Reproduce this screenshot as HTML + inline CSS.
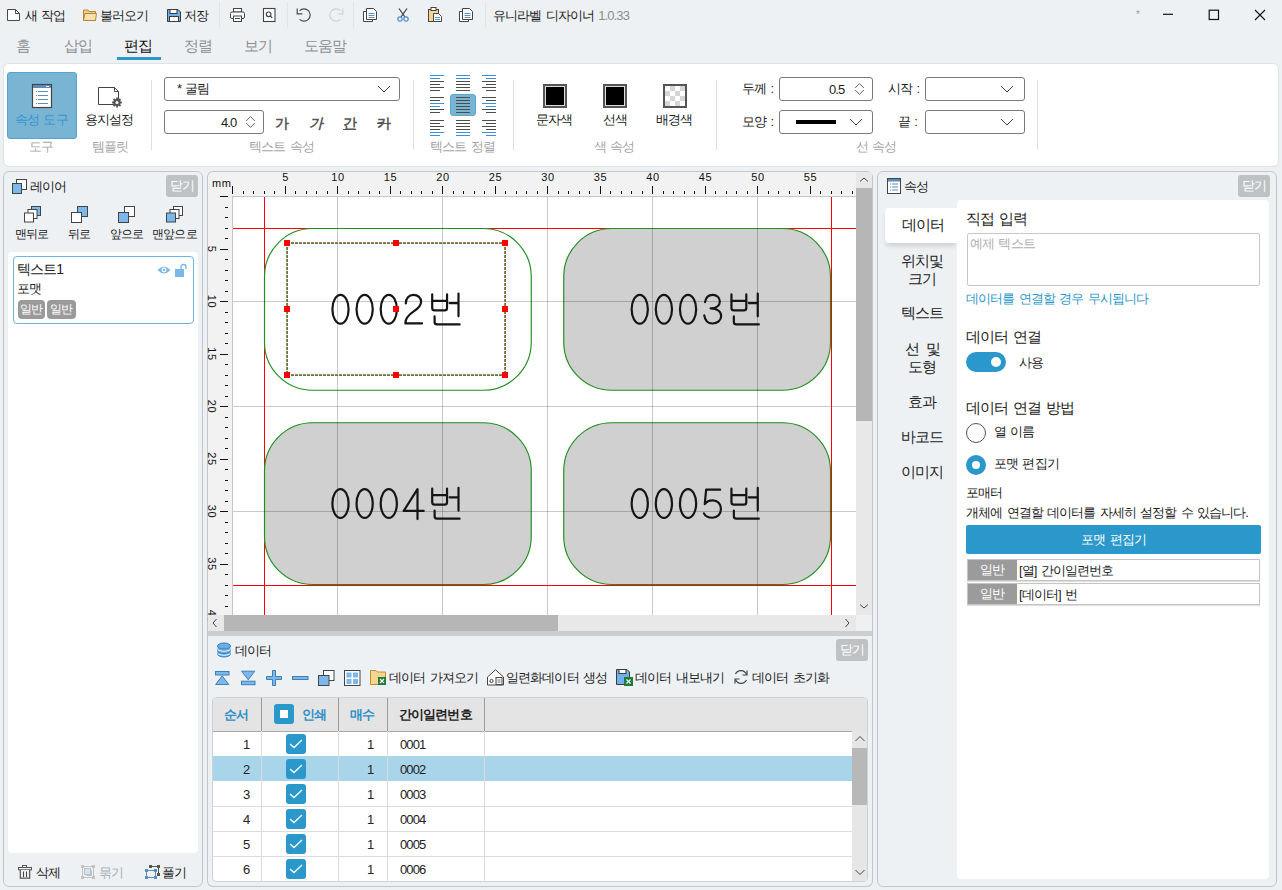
<!DOCTYPE html>
<html><head><meta charset="utf-8">
<style>
*{box-sizing:border-box;margin:0;padding:0}
html,body{width:1282px;height:890px;overflow:hidden;background:#eef1f4;font-family:"Liberation Sans",sans-serif;font-size:13px;letter-spacing:-0.9px;word-spacing:1.5px;color:#222}
.a{position:absolute}
.t{position:absolute;white-space:nowrap;line-height:1;margin-left:-1px}
svg{position:absolute;overflow:visible}
.sep{position:absolute;width:1px;background:#dcdfe2}
.gl{position:absolute;white-space:nowrap;line-height:1;color:#a2a5a8;font-size:13px;margin-left:-1px}
.combo{position:absolute;border:1px solid #7a7a7a;border-radius:3px;background:#fff}
.panel{position:absolute;border:1px solid #c3c7cb;border-radius:6px;background:#eef1f4}
.close{position:absolute;background:#bec2c5;color:#fff;border-radius:3px;font-size:13px;line-height:22px;text-align:center}
</style></head><body>

<!-- ===== TITLE BAR ===== -->
<div id="titlebar">
<svg style="left:7px;top:9px" width="14" height="12" viewBox="0 0 14 12"><path d="M0.5 0.5H8.5L12.5 4.5V11.5H0.5Z M8.5 0.5V4.5H12.5" fill="#fff" stroke="#4a4a4a" stroke-width="1"/></svg>
<div class="t" style="left:26px;top:9px">새 작업</div>
<svg style="left:83px;top:9px" width="14" height="12" viewBox="0 0 14 12"><path d="M0.5 1H5L6.2 2.5H12.5V11.5H0.5Z" fill="#f3cf85" stroke="#b8863a"/><path d="M0.5 11.5L2 4.5H13.5L12.5 11.5Z" fill="#fde2a8" stroke="#b8863a"/></svg>
<div class="t" style="left:101px;top:9px">불러오기</div>
<svg style="left:167px;top:9px" width="14" height="13" viewBox="0 0 14 13"><path d="M0.5 0.5H11L13.5 3V12.5H0.5Z" fill="#6fb1e8" stroke="#3b3b3b"/><rect x="3" y="0.5" width="7" height="4" fill="#fff" stroke="#3b3b3b"/><rect x="2.5" y="7.5" width="9" height="5" fill="#fff" stroke="#3b3b3b"/></svg>
<div class="t" style="left:185px;top:9px">저장</div>
<div class="sep" style="left:219px;top:2px;height:26px;background:#e1e4e7"></div>
<!-- print -->
<svg style="left:230px;top:8px" width="15" height="14" viewBox="0 0 15 14"><rect x="3.5" y="0.5" width="8" height="3.5" fill="#fff" stroke="#444"/><rect x="0.5" y="4" width="14" height="6.5" rx="1.5" fill="#fff" stroke="#444"/><rect x="3.5" y="8" width="8" height="5.5" fill="#fff" stroke="#444"/><line x1="5" y1="10.5" x2="10" y2="10.5" stroke="#444"/></svg>
<!-- preview -->
<svg style="left:263px;top:8px" width="13" height="14" viewBox="0 0 13 14"><rect x="0.5" y="0.5" width="11.5" height="13" fill="#fff" stroke="#444" stroke-width="1.1"/><circle cx="5.6" cy="6.3" r="2.3" fill="none" stroke="#444" stroke-width="1.2"/><line x1="7.3" y1="8" x2="9.2" y2="9.9" stroke="#444" stroke-width="1.3"/></svg>
<div class="sep" style="left:287px;top:2px;height:26px;background:#e1e4e7"></div>
<!-- undo/redo -->
<svg style="left:296px;top:7px" width="16" height="16" viewBox="0 0 16 16"><path d="M3.6 3.6A6.2 6.2 0 1 1 3.6 12.4" fill="none" stroke="#4a4a4a" stroke-width="1.2"/><path d="M1.2 1.6V6.9H6.4" fill="none" stroke="#4a4a4a" stroke-width="1.2"/></svg>
<svg style="left:328px;top:7px" width="16" height="16" viewBox="0 0 16 16"><path d="M12.4 3.6A6.2 6.2 0 1 0 12.4 12.4" fill="none" stroke="#cdd0d3" stroke-width="1.2"/><path d="M14.8 1.6V6.9H9.6" fill="none" stroke="#cdd0d3" stroke-width="1.2"/></svg>
<div class="sep" style="left:353px;top:2px;height:26px;background:#e1e4e7"></div>
<!-- copy -->
<svg style="left:363px;top:8px" width="15" height="14" viewBox="0 0 15 14"><path d="M3.5 3.5H0.5V13.5H9.5V11" fill="#fff" stroke="#444"/><path d="M3.5 0.5H10.5L13.5 3.5V11.5H3.5Z" fill="#fff" stroke="#444"/><path d="M5.5 5.5H11.5M5.5 7.5H11.5M5.5 9.5H11.5" stroke="#5b93c8"/></svg>
<!-- cut -->
<svg style="left:397px;top:8px" width="12" height="14" viewBox="0 0 12 14"><path d="M2 0.5L8 9M10 0.5L4 9" stroke="#444" stroke-width="1.3"/><circle cx="3" cy="11" r="2.2" fill="none" stroke="#4f8fd0" stroke-width="1.2"/><circle cx="9" cy="11" r="2.2" fill="none" stroke="#4f8fd0" stroke-width="1.2"/></svg>
<!-- paste -->
<svg style="left:428px;top:7px" width="14" height="15" viewBox="0 0 14 15"><rect x="0.5" y="2.5" width="10" height="12" fill="#f3d59b" stroke="#444"/><rect x="3" y="0.5" width="5" height="3" fill="#fff" stroke="#444"/><path d="M5.5 6.5H10.5L13.5 9.5V14.5H5.5Z" fill="#fff" stroke="#444"/><path d="M7 10.5H12M7 12.5H12" stroke="#5b93c8"/></svg>
<svg style="left:459px;top:8px" width="15" height="14" viewBox="0 0 15 14"><path d="M3.5 3.5H0.5V13.5H9.5V11" fill="#fff" stroke="#444"/><path d="M3.5 0.5H10.5L13.5 3.5V11.5H3.5Z" fill="#fff" stroke="#444"/><path d="M5.5 5.5H11.5M5.5 7.5H11.5M5.5 9.5H11.5" stroke="#5b93c8"/></svg>
<div class="sep" style="left:485px;top:2px;height:26px;background:#e1e4e7"></div>
<div class="t" style="left:494px;top:9px">유니라벨 디자이너 <span style="color:#8a8d90">1.0.33</span></div>
<div class="t" style="left:1137px;top:10px;color:#999;font-size:10px">*</div>
<svg style="left:1163px;top:8px" width="12" height="12" viewBox="0 0 12 12"><line x1="0" y1="6.3" x2="10" y2="6.3" stroke="#111" stroke-width="1.2"/></svg>
<svg style="left:1208px;top:9px" width="12" height="12" viewBox="0 0 12 12"><rect x="1.2" y="1.2" width="9.3" height="9.3" fill="none" stroke="#111" stroke-width="1.2"/></svg>
<svg style="left:1254px;top:9px" width="12" height="12" viewBox="0 0 12 12"><path d="M1 1L11 11M11 1L1 11" stroke="#111" stroke-width="1.1"/></svg>
</div>

<!-- ===== TABS ===== -->
<div class="t" style="left:17px;top:38px;font-size:15px;color:#8c9094">홈</div>
<div class="t" style="left:65px;top:38px;font-size:15px;color:#8c9094">삽입</div>
<div class="t" style="left:125px;top:38px;font-size:15px;color:#111">편집</div>
<div class="a" style="left:117px;top:57px;width:44px;height:3px;background:#2b98cc"></div>
<div class="t" style="left:185px;top:38px;font-size:15px;color:#8c9094">정렬</div>
<div class="t" style="left:245px;top:38px;font-size:15px;color:#8c9094">보기</div>
<div class="t" style="left:305px;top:38px;font-size:15px;color:#8c9094">도움말</div>

<!-- ===== RIBBON ===== -->
<div class="a" style="left:4px;top:64px;width:1274px;height:102px;background:#fff;border-radius:5px;box-shadow:0 0 0 1px #e0e3e6,0 1px 0 0 #c9ccd0"></div>
<!-- active button -->
<div class="a" style="left:7px;top:72px;width:70px;height:67px;background:#7ab4d3;border:1px solid #52a6d6;border-radius:3px"></div>
<svg style="left:32px;top:84px" width="21" height="25" viewBox="0 0 21 25"><rect x="0.5" y="0.5" width="19" height="23" fill="#fff" stroke="#444" stroke-width="1.2"/><rect x="1" y="1" width="18" height="3" fill="#5b8db8"/><rect x="14" y="2" width="3" height="1" fill="#fff"/><g fill="#5b8db8"><rect x="4" y="7" width="1" height="1"/><rect x="6" y="7" width="10" height="1"/><rect x="4" y="11" width="1" height="1"/><rect x="6" y="11" width="10" height="1"/><rect x="4" y="15" width="1" height="1"/><rect x="6" y="15" width="10" height="1"/><rect x="4" y="19" width="1" height="1"/><rect x="6" y="19" width="10" height="1"/></g></svg>
<div class="t" style="left:16px;top:113px;color:#2e93d2">속성 도구</div>
<svg style="left:98px;top:87px" width="27" height="22" viewBox="0 0 27 22"><path d="M0.5 0.5H16.5L20.5 4.5V17.5H0.5Z M16.5 0.5V4.5H20.5" fill="#fff" stroke="#444"/><g transform="translate(19 15.5)"><circle r="3.6" fill="#555"/><g stroke="#555" stroke-width="1.8"><line x1="0" y1="-5" x2="0" y2="5"/><line x1="-5" y1="0" x2="5" y2="0"/><line x1="-3.5" y1="-3.5" x2="3.5" y2="3.5"/><line x1="-3.5" y1="3.5" x2="3.5" y2="-3.5"/></g><circle r="1.5" fill="#fff"/></g></svg>
<div class="t" style="left:86px;top:113px">용지설정</div>
<div class="gl" style="left:30px;top:140px">도구</div>
<div class="gl" style="left:93px;top:140px">템플릿</div>
<div class="sep" style="left:151px;top:80px;height:70px"></div>
<!-- font combo -->
<div class="combo" style="left:164px;top:77px;width:236px;height:24px"></div>
<div class="t" style="left:178px;top:82px">* 굴림</div>
<svg style="left:377px;top:85px" width="14" height="8" viewBox="0 0 14 8"><path d="M1 1L7 7L13 1" fill="none" stroke="#444"/></svg>
<div class="combo" style="left:164px;top:110px;width:100px;height:24px"></div>
<div class="t" style="left:222px;top:116px">4.0</div>
<svg style="left:245px;top:115px" width="11" height="14" viewBox="0 0 11 14"><path d="M1.2 6L5.5 1.6L9.8 6M1.2 8L5.5 12.4L9.8 8" fill="none" stroke="#666" stroke-width="1"/></svg>
<div class="t" style="left:276px;top:116px;font-size:14px;font-weight:bold;color:#555">가</div>
<div class="t" style="left:310px;top:116px;font-size:14px;font-weight:bold;font-style:italic;color:#555">가</div>
<div class="t" style="left:344px;top:116px;font-size:14px;font-weight:bold;color:#555;text-decoration:underline">간</div>
<div class="t" style="left:378px;top:116px;font-size:14px;font-weight:bold;color:#555;text-decoration:line-through">카</div>
<div class="gl" style="left:250px;top:140px">텍스트 속성</div>
<div class="sep" style="left:413px;top:80px;height:70px"></div>
<!-- align grid -->
<div class="a" style="left:450px;top:94px;width:26px;height:22px;background:#7ab4d3;border:1px solid #59a7d3;border-radius:3px"></div>
<svg style="left:0;top:0" width="520" height="140" viewBox="0 0 520 140"><rect x="430" y="75" width="14" height="1" fill="#3b8fdc"/><rect x="430" y="78" width="10" height="1" fill="#3b8fdc"/><rect x="430" y="81" width="14" height="1" fill="#4d4d4d"/><rect x="430" y="84" width="10" height="1" fill="#4d4d4d"/><rect x="430" y="87" width="14" height="1" fill="#4d4d4d"/><rect x="430" y="90" width="10" height="1" fill="#4d4d4d"/><rect x="456" y="75" width="14" height="1" fill="#3b8fdc"/><rect x="456" y="78" width="14" height="1" fill="#3b8fdc"/><rect x="456" y="81" width="14" height="1" fill="#4d4d4d"/><rect x="456" y="84" width="14" height="1" fill="#4d4d4d"/><rect x="456" y="87" width="14" height="1" fill="#4d4d4d"/><rect x="456" y="90" width="14" height="1" fill="#4d4d4d"/><rect x="482" y="75" width="14" height="1" fill="#3b8fdc"/><rect x="486" y="78" width="10" height="1" fill="#3b8fdc"/><rect x="482" y="81" width="14" height="1" fill="#4d4d4d"/><rect x="486" y="84" width="10" height="1" fill="#4d4d4d"/><rect x="482" y="87" width="14" height="1" fill="#4d4d4d"/><rect x="486" y="90" width="10" height="1" fill="#4d4d4d"/><rect x="430" y="97" width="14" height="1" fill="#4d4d4d"/><rect x="430" y="100" width="10" height="1" fill="#4d4d4d"/><rect x="430" y="103" width="14" height="1" fill="#3b8fdc"/><rect x="430" y="106" width="10" height="1" fill="#3b8fdc"/><rect x="430" y="109" width="14" height="1" fill="#4d4d4d"/><rect x="430" y="112" width="10" height="1" fill="#4d4d4d"/><rect x="456" y="97" width="14" height="1" fill="#4d4d4d"/><rect x="456" y="100" width="14" height="1" fill="#4d4d4d"/><rect x="456" y="103" width="14" height="1" fill="#4d4d4d"/><rect x="456" y="106" width="14" height="1" fill="#4d4d4d"/><rect x="456" y="109" width="14" height="1" fill="#4d4d4d"/><rect x="456" y="112" width="14" height="1" fill="#4d4d4d"/><rect x="482" y="97" width="14" height="1" fill="#4d4d4d"/><rect x="486" y="100" width="10" height="1" fill="#4d4d4d"/><rect x="482" y="103" width="14" height="1" fill="#3b8fdc"/><rect x="486" y="106" width="10" height="1" fill="#3b8fdc"/><rect x="482" y="109" width="14" height="1" fill="#4d4d4d"/><rect x="486" y="112" width="10" height="1" fill="#4d4d4d"/><rect x="430" y="120" width="14" height="1" fill="#4d4d4d"/><rect x="430" y="123" width="10" height="1" fill="#4d4d4d"/><rect x="430" y="126" width="14" height="1" fill="#4d4d4d"/><rect x="430" y="129" width="10" height="1" fill="#4d4d4d"/><rect x="430" y="132" width="14" height="1" fill="#3b8fdc"/><rect x="430" y="135" width="10" height="1" fill="#3b8fdc"/><rect x="456" y="120" width="14" height="1" fill="#4d4d4d"/><rect x="456" y="123" width="14" height="1" fill="#4d4d4d"/><rect x="456" y="126" width="14" height="1" fill="#4d4d4d"/><rect x="456" y="129" width="14" height="1" fill="#4d4d4d"/><rect x="456" y="132" width="14" height="1" fill="#3b8fdc"/><rect x="456" y="135" width="14" height="1" fill="#3b8fdc"/><rect x="482" y="120" width="14" height="1" fill="#4d4d4d"/><rect x="486" y="123" width="10" height="1" fill="#4d4d4d"/><rect x="482" y="126" width="14" height="1" fill="#4d4d4d"/><rect x="486" y="129" width="10" height="1" fill="#4d4d4d"/><rect x="482" y="132" width="14" height="1" fill="#3b8fdc"/><rect x="486" y="135" width="10" height="1" fill="#3b8fdc"/></svg>
<div class="gl" style="left:431px;top:140px">텍스트 정렬</div>
<div class="sep" style="left:513px;top:80px;height:70px"></div>
<!-- colors -->
<div class="a" style="left:543px;top:84px;width:24px;height:24px;background:#000;border:2px solid #555;box-shadow:inset 0 0 0 1px #ddd"></div>
<div class="t" style="left:537px;top:113px">문자색</div>
<div class="a" style="left:603px;top:84px;width:24px;height:24px;background:#000;border:2px solid #555;box-shadow:inset 0 0 0 1px #ddd"></div>
<div class="t" style="left:604px;top:113px">선색</div>
<div class="a" style="left:663px;top:84px;width:24px;height:24px;border:2px solid #555;background-color:#fff;background-image:linear-gradient(45deg,#d6d6d6 25%,transparent 25%,transparent 75%,#d6d6d6 75%),linear-gradient(45deg,#d6d6d6 25%,transparent 25%,transparent 75%,#d6d6d6 75%);background-size:10px 10px;background-position:0 0,5px 5px"></div>
<div class="t" style="left:657px;top:113px">배경색</div>
<div class="gl" style="left:595px;top:140px">색 속성</div>
<div class="sep" style="left:716px;top:80px;height:70px"></div>
<!-- line props -->
<div class="t" style="left:743px;top:82px">두께 :</div>
<div class="combo" style="left:779px;top:77px;width:94px;height:24px"></div>
<div class="t" style="left:830px;top:83px">0.5</div>
<svg style="left:854px;top:82px" width="11" height="14" viewBox="0 0 11 14"><path d="M1.2 6L5.5 1.6L9.8 6M1.2 8L5.5 12.4L9.8 8" fill="none" stroke="#666" stroke-width="1"/></svg>
<div class="t" style="left:743px;top:115px">모양 :</div>
<div class="combo" style="left:779px;top:110px;width:94px;height:24px"></div>
<div class="a" style="left:796px;top:120px;width:40px;height:4px;background:#000"></div>
<svg style="left:849px;top:118px" width="14" height="8" viewBox="0 0 14 8"><path d="M1 1L7 7L13 1" fill="none" stroke="#444"/></svg>
<div class="gl" style="left:857px;top:140px">선 속성</div>
<div class="t" style="left:889px;top:82px">시작 :</div>
<div class="combo" style="left:925px;top:77px;width:100px;height:24px"></div>
<svg style="left:1000px;top:85px" width="14" height="8" viewBox="0 0 14 8"><path d="M1 1L7 7L13 1" fill="none" stroke="#444"/></svg>
<div class="t" style="left:899px;top:115px">끝 :</div>
<div class="combo" style="left:925px;top:110px;width:100px;height:24px"></div>
<svg style="left:1000px;top:118px" width="14" height="8" viewBox="0 0 14 8"><path d="M1 1L7 7L13 1" fill="none" stroke="#444"/></svg>
<div class="sep" style="left:1037px;top:80px;height:70px"></div>

<!-- ===== LEFT PANEL ===== -->
<div class="panel" style="left:3px;top:171px;width:200px;height:716px"></div>
<svg style="left:12px;top:179px" width="15" height="15" viewBox="0 0 15 15"><rect x="4.5" y="0.5" width="10" height="10" fill="#fff" stroke="#444"/><rect x="0.5" y="4.5" width="9" height="10" fill="#7cb8ea" stroke="#444"/></svg>
<div class="t" style="left:31px;top:180px">레이어</div>
<div class="close" style="left:166px;top:175px;width:32px;height:22px">닫기</div>
<!-- order buttons -->
<svg style="left:24px;top:206px" width="17" height="17" viewBox="0 0 17 17"><rect x="7.5" y="0.5" width="9" height="9" fill="#7cb8ea" stroke="#444"/><rect x="4" y="3.5" width="9" height="9" fill="#fff" stroke="#444"/><rect x="0.5" y="7" width="9" height="9" fill="#fff" stroke="#444"/></svg>
<div class="t" style="left:16px;top:228px;font-size:12px;letter-spacing:-0.8px">맨뒤로</div>
<svg style="left:71px;top:206px" width="17" height="17" viewBox="0 0 17 17"><rect x="6.5" y="0.5" width="10" height="10" fill="#7cb8ea" stroke="#444"/><rect x="0.5" y="6.5" width="10" height="10" fill="#fff" stroke="#444"/></svg>
<div class="t" style="left:69px;top:228px;font-size:12px;letter-spacing:-0.8px">뒤로</div>
<svg style="left:118px;top:206px" width="17" height="17" viewBox="0 0 17 17"><rect x="6.5" y="0.5" width="10" height="10" fill="#fff" stroke="#444"/><rect x="0.5" y="6.5" width="10" height="10" fill="#7cb8ea" stroke="#444"/></svg>
<div class="t" style="left:111px;top:228px;font-size:12px;letter-spacing:-0.8px">앞으로</div>
<svg style="left:166px;top:206px" width="17" height="17" viewBox="0 0 17 17"><rect x="7.5" y="0.5" width="9" height="9" fill="#fff" stroke="#444"/><rect x="4" y="3.5" width="9" height="9" fill="#fff" stroke="#444"/><rect x="0.5" y="7" width="9" height="9" fill="#7cb8ea" stroke="#444"/></svg>
<div class="t" style="left:153px;top:228px;font-size:12px;letter-spacing:-0.8px">맨앞으로</div>
<!-- list -->
<div class="a" style="left:8px;top:252px;width:190px;height:601px;background:#fff;border-radius:4px"></div>
<div class="a" style="left:13px;top:256px;width:181px;height:68px;border:1px solid #6cb6e0;border-radius:4px;background:#fff"></div>
<div class="t" style="left:18px;top:262px;font-size:14px">텍스트1</div>
<svg style="left:157px;top:265px" width="14" height="10" viewBox="0 0 14 10"><path d="M0.5 5Q7 -2 13.5 5Q7 12 0.5 5Z" fill="#7cb8ea"/><circle cx="7" cy="5" r="2.4" fill="#fff"/><circle cx="7" cy="5" r="1.3" fill="#7cb8ea"/></svg>
<svg style="left:175px;top:264px" width="13" height="13" viewBox="0 0 13 13"><rect x="0" y="5" width="9" height="8" fill="#7cb8ea"/><path d="M6 5V3A2.5 2.5 0 0 1 11 3V5" fill="none" stroke="#7cb8ea" stroke-width="1.4"/></svg>
<div class="t" style="left:18px;top:282px">포맷</div>
<div class="a" style="left:18px;top:300px;width:27px;height:19px;background:#9a9a9a;border-radius:4px;color:#fff;line-height:19px;text-align:center;font-size:12px;letter-spacing:-0.8px">일반</div>
<div class="a" style="left:47px;top:300px;width:29px;height:19px;background:#9a9a9a;border-radius:4px;color:#fff;line-height:19px;text-align:center;font-size:12px;letter-spacing:-0.8px">일반</div>
<!-- bottom buttons -->
<svg style="left:18px;top:865px" width="14" height="14" viewBox="0 0 14 14"><rect x="4.5" y="0.5" width="4" height="2" fill="#fff" stroke="#555"/><rect x="0.5" y="2.5" width="13" height="2.3" fill="#eee" stroke="#555"/><path d="M2.3 5V13.2H11.7V5" fill="#eee" stroke="#555" stroke-width="1.2"/><path d="M5.5 6.5V12M8.5 6.5V12" stroke="#444"/></svg>
<div class="t" style="left:37px;top:866px">삭제</div>
<svg style="left:81px;top:865px" width="14" height="14" viewBox="0 0 14 14"><rect x="1.5" y="1.5" width="11" height="11" fill="none" stroke="#c2c2c2"/><rect x="3.5" y="3.5" width="6" height="6" fill="#cfe3f5" stroke="#c2c2c2"/><path d="M9.5 5.5H10.5V10.5H5.5V9.5" fill="none" stroke="#c2c2c2"/><g fill="#c2c2c2"><rect x="0" y="0" width="3" height="3"/><rect x="11" y="0" width="3" height="3"/><rect x="0" y="11" width="3" height="3"/><rect x="11" y="11" width="3" height="3"/></g></svg>
<div class="t" style="left:100px;top:866px;color:#a9adb1">묶기</div>
<svg style="left:145px;top:865px" width="15" height="14" viewBox="0 0 15 14"><path d="M5 1.5H13.5V10" fill="none" stroke="#555"/><path d="M1.5 5.5H10.5V12.5H1.5Z" fill="none" stroke="#5b8db8"/><g fill="#555"><rect x="4" y="0" width="3" height="3"/><rect x="12" y="0" width="3" height="3"/><rect x="12" y="8" width="3" height="3"/></g><g fill="#5b8db8"><rect x="0" y="4" width="3" height="3"/><rect x="9" y="4" width="3" height="3"/><rect x="0" y="11" width="3" height="3"/><rect x="9" y="11" width="3" height="3"/></g></svg>
<div class="t" style="left:163px;top:866px">풀기</div>

<!-- ===== CANVAS PANEL ===== -->
<div class="a" style="left:207px;top:171px;width:666px;height:465px;border:1px solid #c3c7cb;border-bottom:none;border-radius:6px 6px 0 0;background:#f2f2f2;overflow:hidden"></div>
<div class="a" style="left:233px;top:197px;width:623px;height:418px;background:#fff"></div>
<svg style="left:0;top:0" width="1282" height="640" viewBox="0 0 1282 640"><rect x="232" y="196" width="624" height="1" fill="#c6c6c6"/><rect x="232" y="196" width="1" height="419" fill="#c6c6c6"/><g fill="#111"><rect x="232" y="186" width="1" height="8"/><rect x="243" y="191" width="1" height="3"/><rect x="253" y="191" width="1" height="3"/><rect x="264" y="191" width="1" height="3"/><rect x="274" y="191" width="1" height="3"/><rect x="285" y="186" width="1" height="8"/><rect x="295" y="191" width="1" height="3"/><rect x="306" y="191" width="1" height="3"/><rect x="316" y="191" width="1" height="3"/><rect x="327" y="191" width="1" height="3"/><rect x="337" y="186" width="1" height="8"/><rect x="348" y="191" width="1" height="3"/><rect x="358" y="191" width="1" height="3"/><rect x="369" y="191" width="1" height="3"/><rect x="379" y="191" width="1" height="3"/><rect x="390" y="186" width="1" height="8"/><rect x="400" y="191" width="1" height="3"/><rect x="411" y="191" width="1" height="3"/><rect x="421" y="191" width="1" height="3"/><rect x="432" y="191" width="1" height="3"/><rect x="442" y="186" width="1" height="8"/><rect x="453" y="191" width="1" height="3"/><rect x="463" y="191" width="1" height="3"/><rect x="474" y="191" width="1" height="3"/><rect x="484" y="191" width="1" height="3"/><rect x="495" y="186" width="1" height="8"/><rect x="505" y="191" width="1" height="3"/><rect x="516" y="191" width="1" height="3"/><rect x="526" y="191" width="1" height="3"/><rect x="537" y="191" width="1" height="3"/><rect x="547" y="186" width="1" height="8"/><rect x="558" y="191" width="1" height="3"/><rect x="568" y="191" width="1" height="3"/><rect x="579" y="191" width="1" height="3"/><rect x="589" y="191" width="1" height="3"/><rect x="600" y="186" width="1" height="8"/><rect x="610" y="191" width="1" height="3"/><rect x="621" y="191" width="1" height="3"/><rect x="631" y="191" width="1" height="3"/><rect x="642" y="191" width="1" height="3"/><rect x="652" y="186" width="1" height="8"/><rect x="663" y="191" width="1" height="3"/><rect x="673" y="191" width="1" height="3"/><rect x="684" y="191" width="1" height="3"/><rect x="694" y="191" width="1" height="3"/><rect x="705" y="186" width="1" height="8"/><rect x="715" y="191" width="1" height="3"/><rect x="726" y="191" width="1" height="3"/><rect x="736" y="191" width="1" height="3"/><rect x="747" y="191" width="1" height="3"/><rect x="757" y="186" width="1" height="8"/><rect x="768" y="191" width="1" height="3"/><rect x="778" y="191" width="1" height="3"/><rect x="789" y="191" width="1" height="3"/><rect x="799" y="191" width="1" height="3"/><rect x="810" y="186" width="1" height="8"/><rect x="820" y="191" width="1" height="3"/><rect x="831" y="191" width="1" height="3"/><rect x="841" y="191" width="1" height="3"/><rect x="852" y="191" width="1" height="3"/><rect x="220" y="196" width="8" height="1"/><rect x="225" y="207" width="3" height="1"/><rect x="225" y="217" width="3" height="1"/><rect x="225" y="228" width="3" height="1"/><rect x="225" y="238" width="3" height="1"/><rect x="220" y="249" width="8" height="1"/><rect x="225" y="259" width="3" height="1"/><rect x="225" y="270" width="3" height="1"/><rect x="225" y="280" width="3" height="1"/><rect x="225" y="291" width="3" height="1"/><rect x="220" y="301" width="8" height="1"/><rect x="225" y="312" width="3" height="1"/><rect x="225" y="322" width="3" height="1"/><rect x="225" y="333" width="3" height="1"/><rect x="225" y="343" width="3" height="1"/><rect x="220" y="354" width="8" height="1"/><rect x="225" y="364" width="3" height="1"/><rect x="225" y="375" width="3" height="1"/><rect x="225" y="385" width="3" height="1"/><rect x="225" y="396" width="3" height="1"/><rect x="220" y="406" width="8" height="1"/><rect x="225" y="417" width="3" height="1"/><rect x="225" y="427" width="3" height="1"/><rect x="225" y="438" width="3" height="1"/><rect x="225" y="448" width="3" height="1"/><rect x="220" y="459" width="8" height="1"/><rect x="225" y="469" width="3" height="1"/><rect x="225" y="480" width="3" height="1"/><rect x="225" y="490" width="3" height="1"/><rect x="225" y="501" width="3" height="1"/><rect x="220" y="511" width="8" height="1"/><rect x="225" y="522" width="3" height="1"/><rect x="225" y="532" width="3" height="1"/><rect x="225" y="543" width="3" height="1"/><rect x="225" y="553" width="3" height="1"/><rect x="220" y="564" width="8" height="1"/><rect x="225" y="574" width="3" height="1"/><rect x="225" y="585" width="3" height="1"/><rect x="225" y="595" width="3" height="1"/><rect x="225" y="606" width="3" height="1"/></g><g font-family="Liberation Sans" font-size="11" fill="#111" letter-spacing="0.6"><text x="285.5" y="181" text-anchor="middle">5</text><text x="338.0" y="181" text-anchor="middle">10</text><text x="390.5" y="181" text-anchor="middle">15</text><text x="443.0" y="181" text-anchor="middle">20</text><text x="495.5" y="181" text-anchor="middle">25</text><text x="548.0" y="181" text-anchor="middle">30</text><text x="600.5" y="181" text-anchor="middle">35</text><text x="653.0" y="181" text-anchor="middle">40</text><text x="705.5" y="181" text-anchor="middle">45</text><text x="758.0" y="181" text-anchor="middle">50</text><text x="810.5" y="181" text-anchor="middle">55</text><text transform="translate(208 249.0) rotate(90)" x="0" y="0" text-anchor="middle">5</text><text transform="translate(208 301.5) rotate(90)" x="0" y="0" text-anchor="middle">10</text><text transform="translate(208 354.0) rotate(90)" x="0" y="0" text-anchor="middle">15</text><text transform="translate(208 406.5) rotate(90)" x="0" y="0" text-anchor="middle">20</text><text transform="translate(208 459.0) rotate(90)" x="0" y="0" text-anchor="middle">25</text><text transform="translate(208 511.5) rotate(90)" x="0" y="0" text-anchor="middle">30</text><text transform="translate(208 564.0) rotate(90)" x="0" y="0" text-anchor="middle">35</text><text transform="translate(208 616.5) rotate(90)" x="0" y="0" text-anchor="middle">40</text><text x="212" y="187">mm</text></g></svg>
<svg style="left:233px;top:197px" width="623" height="418" viewBox="233 197 623 418"><g fill="#ff0000"><rect x="264" y="197" width="1" height="418"/><rect x="831" y="197" width="1" height="418"/><rect x="233" y="228" width="623" height="1"/><rect x="233" y="585" width="623" height="1"/></g><rect x="264.50" y="228.50" width="266.75" height="161.75" rx="48" ry="48" fill="#fff" stroke="#1f8f1f" stroke-width="1.15"/><rect x="563.75" y="228.50" width="266.75" height="161.75" rx="48" ry="48" fill="#d0d0d0" stroke="#1f8f1f" stroke-width="1.15"/><rect x="264.50" y="422.75" width="266.75" height="161.75" rx="48" ry="48" fill="#d0d0d0" stroke="#1f8f1f" stroke-width="1.15"/><rect x="563.75" y="422.75" width="266.75" height="161.75" rx="48" ry="48" fill="#d0d0d0" stroke="#1f8f1f" stroke-width="1.15"/><g fill="#000" fill-opacity="0.21"><rect x="337" y="197" width="1" height="418"/><rect x="442" y="197" width="1" height="418"/><rect x="547" y="197" width="1" height="418"/><rect x="652" y="197" width="1" height="418"/><rect x="757" y="197" width="1" height="418"/><rect x="233" y="301" width="623" height="1"/><rect x="233" y="406" width="623" height="1"/><rect x="233" y="511" width="623" height="1"/></g><g transform="translate(331.40 293.80)" fill="none" stroke="#151515" stroke-width="2.2" stroke-linecap="round" stroke-linejoin="round"><ellipse cx="9.10" cy="15.45" rx="8.1" ry="14.4"/><ellipse cx="33.25" cy="15.45" rx="8.1" ry="14.4"/><ellipse cx="57.40" cy="15.45" rx="8.1" ry="14.4"/><path d="M74.4 9.6C74.4 4.3 77.6 1.1 82 1.1C86.6 1.1 89.7 4.2 89.7 8C89.7 11.8 87.4 14.2 82.6 17.4C76.8 21.3 73.9 24.6 73.9 29.6H90.6"/><path d="M100.8 0.6V14.1Q100.8 16.6 103.3 16.6H113.2Q115.65 16.6 115.65 14.1V0.6M100.8 7H115.65M127.1 -0.2V22.5M118.2 9.3H127.1M103.2 22.6V28.1Q103.2 30.6 105.7 30.6H128.2"/></g><g transform="translate(630.65 293.80)" fill="none" stroke="#151515" stroke-width="2.2" stroke-linecap="round" stroke-linejoin="round"><ellipse cx="9.10" cy="15.45" rx="8.1" ry="14.4"/><ellipse cx="33.25" cy="15.45" rx="8.1" ry="14.4"/><ellipse cx="57.40" cy="15.45" rx="8.1" ry="14.4"/><path d="M74.4 8.3C75.2 3.6 78.2 1.1 82 1.1C86.2 1.1 89.2 3.9 89.2 7.7C89.2 11.6 85.8 14.6 80 14.6C86.6 14.6 90.5 17.8 90.5 22.2C90.5 26.6 86.8 29.7 81.9 29.7C77.6 29.7 74.4 27.2 73.6 21.6"/><path d="M100.8 0.6V14.1Q100.8 16.6 103.3 16.6H113.2Q115.65 16.6 115.65 14.1V0.6M100.8 7H115.65M127.1 -0.2V22.5M118.2 9.3H127.1M103.2 22.6V28.1Q103.2 30.6 105.7 30.6H128.2"/></g><g transform="translate(331.40 488.05)" fill="none" stroke="#151515" stroke-width="2.2" stroke-linecap="round" stroke-linejoin="round"><ellipse cx="9.10" cy="15.45" rx="8.1" ry="14.4"/><ellipse cx="33.25" cy="15.45" rx="8.1" ry="14.4"/><ellipse cx="57.40" cy="15.45" rx="8.1" ry="14.4"/><path d="M86.1 31V1L72.3 22.9H92.3"/><path d="M100.8 0.6V14.1Q100.8 16.6 103.3 16.6H113.2Q115.65 16.6 115.65 14.1V0.6M100.8 7H115.65M127.1 -0.2V22.5M118.2 9.3H127.1M103.2 22.6V28.1Q103.2 30.6 105.7 30.6H128.2"/></g><g transform="translate(630.65 488.05)" fill="none" stroke="#151515" stroke-width="2.2" stroke-linecap="round" stroke-linejoin="round"><ellipse cx="9.10" cy="15.45" rx="8.1" ry="14.4"/><ellipse cx="33.25" cy="15.45" rx="8.1" ry="14.4"/><ellipse cx="57.40" cy="15.45" rx="8.1" ry="14.4"/><path d="M89.5 1.6H75.5L74.1 16.2C75.8 13.6 78.6 12.3 82 12.3C87 12.3 90.3 16.1 90.3 21C90.3 26 86.8 29.7 81.8 29.7C77.6 29.7 74.4 27.6 73.3 25.3"/><path d="M100.8 0.6V14.1Q100.8 16.6 103.3 16.6H113.2Q115.65 16.6 115.65 14.1V0.6M100.8 7H115.65M127.1 -0.2V22.5M118.2 9.3H127.1M103.2 22.6V28.1Q103.2 30.6 105.7 30.6H128.2"/></g><rect x="287" y="242" width="3" height="1" fill="#52a75a"/><rect x="291" y="242" width="3" height="1" fill="#52a75a"/><rect x="295" y="242" width="3" height="1" fill="#52a75a"/><rect x="299" y="242" width="3" height="1" fill="#52a75a"/><rect x="303" y="242" width="3" height="1" fill="#52a75a"/><rect x="307" y="242" width="3" height="1" fill="#52a75a"/><rect x="311" y="242" width="3" height="1" fill="#52a75a"/><rect x="315" y="242" width="3" height="1" fill="#52a75a"/><rect x="319" y="242" width="3" height="1" fill="#52a75a"/><rect x="323" y="242" width="3" height="1" fill="#52a75a"/><rect x="327" y="242" width="3" height="1" fill="#52a75a"/><rect x="331" y="242" width="3" height="1" fill="#52a75a"/><rect x="335" y="242" width="3" height="1" fill="#52a75a"/><rect x="339" y="242" width="3" height="1" fill="#52a75a"/><rect x="343" y="242" width="3" height="1" fill="#52a75a"/><rect x="347" y="242" width="3" height="1" fill="#52a75a"/><rect x="351" y="242" width="3" height="1" fill="#52a75a"/><rect x="355" y="242" width="3" height="1" fill="#52a75a"/><rect x="359" y="242" width="3" height="1" fill="#52a75a"/><rect x="363" y="242" width="3" height="1" fill="#52a75a"/><rect x="367" y="242" width="3" height="1" fill="#52a75a"/><rect x="371" y="242" width="3" height="1" fill="#52a75a"/><rect x="375" y="242" width="3" height="1" fill="#52a75a"/><rect x="379" y="242" width="3" height="1" fill="#52a75a"/><rect x="383" y="242" width="3" height="1" fill="#52a75a"/><rect x="387" y="242" width="3" height="1" fill="#52a75a"/><rect x="391" y="242" width="3" height="1" fill="#52a75a"/><rect x="395" y="242" width="3" height="1" fill="#52a75a"/><rect x="399" y="242" width="3" height="1" fill="#52a75a"/><rect x="403" y="242" width="3" height="1" fill="#52a75a"/><rect x="407" y="242" width="3" height="1" fill="#52a75a"/><rect x="411" y="242" width="3" height="1" fill="#52a75a"/><rect x="415" y="242" width="3" height="1" fill="#52a75a"/><rect x="419" y="242" width="3" height="1" fill="#52a75a"/><rect x="423" y="242" width="3" height="1" fill="#52a75a"/><rect x="427" y="242" width="3" height="1" fill="#52a75a"/><rect x="431" y="242" width="3" height="1" fill="#52a75a"/><rect x="435" y="242" width="3" height="1" fill="#52a75a"/><rect x="439" y="242" width="3" height="1" fill="#52a75a"/><rect x="443" y="242" width="3" height="1" fill="#52a75a"/><rect x="447" y="242" width="3" height="1" fill="#52a75a"/><rect x="451" y="242" width="3" height="1" fill="#52a75a"/><rect x="455" y="242" width="3" height="1" fill="#52a75a"/><rect x="459" y="242" width="3" height="1" fill="#52a75a"/><rect x="463" y="242" width="3" height="1" fill="#52a75a"/><rect x="467" y="242" width="3" height="1" fill="#52a75a"/><rect x="471" y="242" width="3" height="1" fill="#52a75a"/><rect x="475" y="242" width="3" height="1" fill="#52a75a"/><rect x="479" y="242" width="3" height="1" fill="#52a75a"/><rect x="483" y="242" width="3" height="1" fill="#52a75a"/><rect x="487" y="242" width="3" height="1" fill="#52a75a"/><rect x="491" y="242" width="3" height="1" fill="#52a75a"/><rect x="495" y="242" width="3" height="1" fill="#52a75a"/><rect x="499" y="242" width="3" height="1" fill="#52a75a"/><rect x="503" y="242" width="3" height="1" fill="#52a75a"/><rect x="287" y="243" width="3" height="1" fill="#b4532e"/><rect x="291" y="243" width="3" height="1" fill="#b4532e"/><rect x="295" y="243" width="3" height="1" fill="#b4532e"/><rect x="299" y="243" width="3" height="1" fill="#b4532e"/><rect x="303" y="243" width="3" height="1" fill="#b4532e"/><rect x="307" y="243" width="3" height="1" fill="#b4532e"/><rect x="311" y="243" width="3" height="1" fill="#b4532e"/><rect x="315" y="243" width="3" height="1" fill="#b4532e"/><rect x="319" y="243" width="3" height="1" fill="#b4532e"/><rect x="323" y="243" width="3" height="1" fill="#b4532e"/><rect x="327" y="243" width="3" height="1" fill="#b4532e"/><rect x="331" y="243" width="3" height="1" fill="#b4532e"/><rect x="335" y="243" width="3" height="1" fill="#b4532e"/><rect x="339" y="243" width="3" height="1" fill="#b4532e"/><rect x="343" y="243" width="3" height="1" fill="#b4532e"/><rect x="347" y="243" width="3" height="1" fill="#b4532e"/><rect x="351" y="243" width="3" height="1" fill="#b4532e"/><rect x="355" y="243" width="3" height="1" fill="#b4532e"/><rect x="359" y="243" width="3" height="1" fill="#b4532e"/><rect x="363" y="243" width="3" height="1" fill="#b4532e"/><rect x="367" y="243" width="3" height="1" fill="#b4532e"/><rect x="371" y="243" width="3" height="1" fill="#b4532e"/><rect x="375" y="243" width="3" height="1" fill="#b4532e"/><rect x="379" y="243" width="3" height="1" fill="#b4532e"/><rect x="383" y="243" width="3" height="1" fill="#b4532e"/><rect x="387" y="243" width="3" height="1" fill="#b4532e"/><rect x="391" y="243" width="3" height="1" fill="#b4532e"/><rect x="395" y="243" width="3" height="1" fill="#b4532e"/><rect x="399" y="243" width="3" height="1" fill="#b4532e"/><rect x="403" y="243" width="3" height="1" fill="#b4532e"/><rect x="407" y="243" width="3" height="1" fill="#b4532e"/><rect x="411" y="243" width="3" height="1" fill="#b4532e"/><rect x="415" y="243" width="3" height="1" fill="#b4532e"/><rect x="419" y="243" width="3" height="1" fill="#b4532e"/><rect x="423" y="243" width="3" height="1" fill="#b4532e"/><rect x="427" y="243" width="3" height="1" fill="#b4532e"/><rect x="431" y="243" width="3" height="1" fill="#b4532e"/><rect x="435" y="243" width="3" height="1" fill="#b4532e"/><rect x="439" y="243" width="3" height="1" fill="#b4532e"/><rect x="443" y="243" width="3" height="1" fill="#b4532e"/><rect x="447" y="243" width="3" height="1" fill="#b4532e"/><rect x="451" y="243" width="3" height="1" fill="#b4532e"/><rect x="455" y="243" width="3" height="1" fill="#b4532e"/><rect x="459" y="243" width="3" height="1" fill="#b4532e"/><rect x="463" y="243" width="3" height="1" fill="#b4532e"/><rect x="467" y="243" width="3" height="1" fill="#b4532e"/><rect x="471" y="243" width="3" height="1" fill="#b4532e"/><rect x="475" y="243" width="3" height="1" fill="#b4532e"/><rect x="479" y="243" width="3" height="1" fill="#b4532e"/><rect x="483" y="243" width="3" height="1" fill="#b4532e"/><rect x="487" y="243" width="3" height="1" fill="#b4532e"/><rect x="491" y="243" width="3" height="1" fill="#b4532e"/><rect x="495" y="243" width="3" height="1" fill="#b4532e"/><rect x="499" y="243" width="3" height="1" fill="#b4532e"/><rect x="503" y="243" width="3" height="1" fill="#b4532e"/><rect x="287" y="374" width="3" height="1" fill="#52a75a"/><rect x="291" y="374" width="3" height="1" fill="#52a75a"/><rect x="295" y="374" width="3" height="1" fill="#52a75a"/><rect x="299" y="374" width="3" height="1" fill="#52a75a"/><rect x="303" y="374" width="3" height="1" fill="#52a75a"/><rect x="307" y="374" width="3" height="1" fill="#52a75a"/><rect x="311" y="374" width="3" height="1" fill="#52a75a"/><rect x="315" y="374" width="3" height="1" fill="#52a75a"/><rect x="319" y="374" width="3" height="1" fill="#52a75a"/><rect x="323" y="374" width="3" height="1" fill="#52a75a"/><rect x="327" y="374" width="3" height="1" fill="#52a75a"/><rect x="331" y="374" width="3" height="1" fill="#52a75a"/><rect x="335" y="374" width="3" height="1" fill="#52a75a"/><rect x="339" y="374" width="3" height="1" fill="#52a75a"/><rect x="343" y="374" width="3" height="1" fill="#52a75a"/><rect x="347" y="374" width="3" height="1" fill="#52a75a"/><rect x="351" y="374" width="3" height="1" fill="#52a75a"/><rect x="355" y="374" width="3" height="1" fill="#52a75a"/><rect x="359" y="374" width="3" height="1" fill="#52a75a"/><rect x="363" y="374" width="3" height="1" fill="#52a75a"/><rect x="367" y="374" width="3" height="1" fill="#52a75a"/><rect x="371" y="374" width="3" height="1" fill="#52a75a"/><rect x="375" y="374" width="3" height="1" fill="#52a75a"/><rect x="379" y="374" width="3" height="1" fill="#52a75a"/><rect x="383" y="374" width="3" height="1" fill="#52a75a"/><rect x="387" y="374" width="3" height="1" fill="#52a75a"/><rect x="391" y="374" width="3" height="1" fill="#52a75a"/><rect x="395" y="374" width="3" height="1" fill="#52a75a"/><rect x="399" y="374" width="3" height="1" fill="#52a75a"/><rect x="403" y="374" width="3" height="1" fill="#52a75a"/><rect x="407" y="374" width="3" height="1" fill="#52a75a"/><rect x="411" y="374" width="3" height="1" fill="#52a75a"/><rect x="415" y="374" width="3" height="1" fill="#52a75a"/><rect x="419" y="374" width="3" height="1" fill="#52a75a"/><rect x="423" y="374" width="3" height="1" fill="#52a75a"/><rect x="427" y="374" width="3" height="1" fill="#52a75a"/><rect x="431" y="374" width="3" height="1" fill="#52a75a"/><rect x="435" y="374" width="3" height="1" fill="#52a75a"/><rect x="439" y="374" width="3" height="1" fill="#52a75a"/><rect x="443" y="374" width="3" height="1" fill="#52a75a"/><rect x="447" y="374" width="3" height="1" fill="#52a75a"/><rect x="451" y="374" width="3" height="1" fill="#52a75a"/><rect x="455" y="374" width="3" height="1" fill="#52a75a"/><rect x="459" y="374" width="3" height="1" fill="#52a75a"/><rect x="463" y="374" width="3" height="1" fill="#52a75a"/><rect x="467" y="374" width="3" height="1" fill="#52a75a"/><rect x="471" y="374" width="3" height="1" fill="#52a75a"/><rect x="475" y="374" width="3" height="1" fill="#52a75a"/><rect x="479" y="374" width="3" height="1" fill="#52a75a"/><rect x="483" y="374" width="3" height="1" fill="#52a75a"/><rect x="487" y="374" width="3" height="1" fill="#52a75a"/><rect x="491" y="374" width="3" height="1" fill="#52a75a"/><rect x="495" y="374" width="3" height="1" fill="#52a75a"/><rect x="499" y="374" width="3" height="1" fill="#52a75a"/><rect x="503" y="374" width="3" height="1" fill="#52a75a"/><rect x="287" y="375" width="3" height="1" fill="#b4532e"/><rect x="291" y="375" width="3" height="1" fill="#b4532e"/><rect x="295" y="375" width="3" height="1" fill="#b4532e"/><rect x="299" y="375" width="3" height="1" fill="#b4532e"/><rect x="303" y="375" width="3" height="1" fill="#b4532e"/><rect x="307" y="375" width="3" height="1" fill="#b4532e"/><rect x="311" y="375" width="3" height="1" fill="#b4532e"/><rect x="315" y="375" width="3" height="1" fill="#b4532e"/><rect x="319" y="375" width="3" height="1" fill="#b4532e"/><rect x="323" y="375" width="3" height="1" fill="#b4532e"/><rect x="327" y="375" width="3" height="1" fill="#b4532e"/><rect x="331" y="375" width="3" height="1" fill="#b4532e"/><rect x="335" y="375" width="3" height="1" fill="#b4532e"/><rect x="339" y="375" width="3" height="1" fill="#b4532e"/><rect x="343" y="375" width="3" height="1" fill="#b4532e"/><rect x="347" y="375" width="3" height="1" fill="#b4532e"/><rect x="351" y="375" width="3" height="1" fill="#b4532e"/><rect x="355" y="375" width="3" height="1" fill="#b4532e"/><rect x="359" y="375" width="3" height="1" fill="#b4532e"/><rect x="363" y="375" width="3" height="1" fill="#b4532e"/><rect x="367" y="375" width="3" height="1" fill="#b4532e"/><rect x="371" y="375" width="3" height="1" fill="#b4532e"/><rect x="375" y="375" width="3" height="1" fill="#b4532e"/><rect x="379" y="375" width="3" height="1" fill="#b4532e"/><rect x="383" y="375" width="3" height="1" fill="#b4532e"/><rect x="387" y="375" width="3" height="1" fill="#b4532e"/><rect x="391" y="375" width="3" height="1" fill="#b4532e"/><rect x="395" y="375" width="3" height="1" fill="#b4532e"/><rect x="399" y="375" width="3" height="1" fill="#b4532e"/><rect x="403" y="375" width="3" height="1" fill="#b4532e"/><rect x="407" y="375" width="3" height="1" fill="#b4532e"/><rect x="411" y="375" width="3" height="1" fill="#b4532e"/><rect x="415" y="375" width="3" height="1" fill="#b4532e"/><rect x="419" y="375" width="3" height="1" fill="#b4532e"/><rect x="423" y="375" width="3" height="1" fill="#b4532e"/><rect x="427" y="375" width="3" height="1" fill="#b4532e"/><rect x="431" y="375" width="3" height="1" fill="#b4532e"/><rect x="435" y="375" width="3" height="1" fill="#b4532e"/><rect x="439" y="375" width="3" height="1" fill="#b4532e"/><rect x="443" y="375" width="3" height="1" fill="#b4532e"/><rect x="447" y="375" width="3" height="1" fill="#b4532e"/><rect x="451" y="375" width="3" height="1" fill="#b4532e"/><rect x="455" y="375" width="3" height="1" fill="#b4532e"/><rect x="459" y="375" width="3" height="1" fill="#b4532e"/><rect x="463" y="375" width="3" height="1" fill="#b4532e"/><rect x="467" y="375" width="3" height="1" fill="#b4532e"/><rect x="471" y="375" width="3" height="1" fill="#b4532e"/><rect x="475" y="375" width="3" height="1" fill="#b4532e"/><rect x="479" y="375" width="3" height="1" fill="#b4532e"/><rect x="483" y="375" width="3" height="1" fill="#b4532e"/><rect x="487" y="375" width="3" height="1" fill="#b4532e"/><rect x="491" y="375" width="3" height="1" fill="#b4532e"/><rect x="495" y="375" width="3" height="1" fill="#b4532e"/><rect x="499" y="375" width="3" height="1" fill="#b4532e"/><rect x="503" y="375" width="3" height="1" fill="#b4532e"/><rect x="286" y="243" width="1" height="3" fill="#52a75a"/><rect x="286" y="247" width="1" height="3" fill="#52a75a"/><rect x="286" y="251" width="1" height="3" fill="#52a75a"/><rect x="286" y="255" width="1" height="3" fill="#52a75a"/><rect x="286" y="259" width="1" height="3" fill="#52a75a"/><rect x="286" y="263" width="1" height="3" fill="#52a75a"/><rect x="286" y="267" width="1" height="3" fill="#52a75a"/><rect x="286" y="271" width="1" height="3" fill="#52a75a"/><rect x="286" y="275" width="1" height="3" fill="#52a75a"/><rect x="286" y="279" width="1" height="3" fill="#52a75a"/><rect x="286" y="283" width="1" height="3" fill="#52a75a"/><rect x="286" y="287" width="1" height="3" fill="#52a75a"/><rect x="286" y="291" width="1" height="3" fill="#52a75a"/><rect x="286" y="295" width="1" height="3" fill="#52a75a"/><rect x="286" y="299" width="1" height="3" fill="#52a75a"/><rect x="286" y="303" width="1" height="3" fill="#52a75a"/><rect x="286" y="307" width="1" height="3" fill="#52a75a"/><rect x="286" y="311" width="1" height="3" fill="#52a75a"/><rect x="286" y="315" width="1" height="3" fill="#52a75a"/><rect x="286" y="319" width="1" height="3" fill="#52a75a"/><rect x="286" y="323" width="1" height="3" fill="#52a75a"/><rect x="286" y="327" width="1" height="3" fill="#52a75a"/><rect x="286" y="331" width="1" height="3" fill="#52a75a"/><rect x="286" y="335" width="1" height="3" fill="#52a75a"/><rect x="286" y="339" width="1" height="3" fill="#52a75a"/><rect x="286" y="343" width="1" height="3" fill="#52a75a"/><rect x="286" y="347" width="1" height="3" fill="#52a75a"/><rect x="286" y="351" width="1" height="3" fill="#52a75a"/><rect x="286" y="355" width="1" height="3" fill="#52a75a"/><rect x="286" y="359" width="1" height="3" fill="#52a75a"/><rect x="286" y="363" width="1" height="3" fill="#52a75a"/><rect x="286" y="367" width="1" height="3" fill="#52a75a"/><rect x="286" y="371" width="1" height="3" fill="#52a75a"/><rect x="287" y="243" width="1" height="3" fill="#b4532e"/><rect x="287" y="247" width="1" height="3" fill="#b4532e"/><rect x="287" y="251" width="1" height="3" fill="#b4532e"/><rect x="287" y="255" width="1" height="3" fill="#b4532e"/><rect x="287" y="259" width="1" height="3" fill="#b4532e"/><rect x="287" y="263" width="1" height="3" fill="#b4532e"/><rect x="287" y="267" width="1" height="3" fill="#b4532e"/><rect x="287" y="271" width="1" height="3" fill="#b4532e"/><rect x="287" y="275" width="1" height="3" fill="#b4532e"/><rect x="287" y="279" width="1" height="3" fill="#b4532e"/><rect x="287" y="283" width="1" height="3" fill="#b4532e"/><rect x="287" y="287" width="1" height="3" fill="#b4532e"/><rect x="287" y="291" width="1" height="3" fill="#b4532e"/><rect x="287" y="295" width="1" height="3" fill="#b4532e"/><rect x="287" y="299" width="1" height="3" fill="#b4532e"/><rect x="287" y="303" width="1" height="3" fill="#b4532e"/><rect x="287" y="307" width="1" height="3" fill="#b4532e"/><rect x="287" y="311" width="1" height="3" fill="#b4532e"/><rect x="287" y="315" width="1" height="3" fill="#b4532e"/><rect x="287" y="319" width="1" height="3" fill="#b4532e"/><rect x="287" y="323" width="1" height="3" fill="#b4532e"/><rect x="287" y="327" width="1" height="3" fill="#b4532e"/><rect x="287" y="331" width="1" height="3" fill="#b4532e"/><rect x="287" y="335" width="1" height="3" fill="#b4532e"/><rect x="287" y="339" width="1" height="3" fill="#b4532e"/><rect x="287" y="343" width="1" height="3" fill="#b4532e"/><rect x="287" y="347" width="1" height="3" fill="#b4532e"/><rect x="287" y="351" width="1" height="3" fill="#b4532e"/><rect x="287" y="355" width="1" height="3" fill="#b4532e"/><rect x="287" y="359" width="1" height="3" fill="#b4532e"/><rect x="287" y="363" width="1" height="3" fill="#b4532e"/><rect x="287" y="367" width="1" height="3" fill="#b4532e"/><rect x="287" y="371" width="1" height="3" fill="#b4532e"/><rect x="504" y="243" width="1" height="3" fill="#52a75a"/><rect x="504" y="247" width="1" height="3" fill="#52a75a"/><rect x="504" y="251" width="1" height="3" fill="#52a75a"/><rect x="504" y="255" width="1" height="3" fill="#52a75a"/><rect x="504" y="259" width="1" height="3" fill="#52a75a"/><rect x="504" y="263" width="1" height="3" fill="#52a75a"/><rect x="504" y="267" width="1" height="3" fill="#52a75a"/><rect x="504" y="271" width="1" height="3" fill="#52a75a"/><rect x="504" y="275" width="1" height="3" fill="#52a75a"/><rect x="504" y="279" width="1" height="3" fill="#52a75a"/><rect x="504" y="283" width="1" height="3" fill="#52a75a"/><rect x="504" y="287" width="1" height="3" fill="#52a75a"/><rect x="504" y="291" width="1" height="3" fill="#52a75a"/><rect x="504" y="295" width="1" height="3" fill="#52a75a"/><rect x="504" y="299" width="1" height="3" fill="#52a75a"/><rect x="504" y="303" width="1" height="3" fill="#52a75a"/><rect x="504" y="307" width="1" height="3" fill="#52a75a"/><rect x="504" y="311" width="1" height="3" fill="#52a75a"/><rect x="504" y="315" width="1" height="3" fill="#52a75a"/><rect x="504" y="319" width="1" height="3" fill="#52a75a"/><rect x="504" y="323" width="1" height="3" fill="#52a75a"/><rect x="504" y="327" width="1" height="3" fill="#52a75a"/><rect x="504" y="331" width="1" height="3" fill="#52a75a"/><rect x="504" y="335" width="1" height="3" fill="#52a75a"/><rect x="504" y="339" width="1" height="3" fill="#52a75a"/><rect x="504" y="343" width="1" height="3" fill="#52a75a"/><rect x="504" y="347" width="1" height="3" fill="#52a75a"/><rect x="504" y="351" width="1" height="3" fill="#52a75a"/><rect x="504" y="355" width="1" height="3" fill="#52a75a"/><rect x="504" y="359" width="1" height="3" fill="#52a75a"/><rect x="504" y="363" width="1" height="3" fill="#52a75a"/><rect x="504" y="367" width="1" height="3" fill="#52a75a"/><rect x="504" y="371" width="1" height="3" fill="#52a75a"/><rect x="505" y="243" width="1" height="3" fill="#b4532e"/><rect x="505" y="247" width="1" height="3" fill="#b4532e"/><rect x="505" y="251" width="1" height="3" fill="#b4532e"/><rect x="505" y="255" width="1" height="3" fill="#b4532e"/><rect x="505" y="259" width="1" height="3" fill="#b4532e"/><rect x="505" y="263" width="1" height="3" fill="#b4532e"/><rect x="505" y="267" width="1" height="3" fill="#b4532e"/><rect x="505" y="271" width="1" height="3" fill="#b4532e"/><rect x="505" y="275" width="1" height="3" fill="#b4532e"/><rect x="505" y="279" width="1" height="3" fill="#b4532e"/><rect x="505" y="283" width="1" height="3" fill="#b4532e"/><rect x="505" y="287" width="1" height="3" fill="#b4532e"/><rect x="505" y="291" width="1" height="3" fill="#b4532e"/><rect x="505" y="295" width="1" height="3" fill="#b4532e"/><rect x="505" y="299" width="1" height="3" fill="#b4532e"/><rect x="505" y="303" width="1" height="3" fill="#b4532e"/><rect x="505" y="307" width="1" height="3" fill="#b4532e"/><rect x="505" y="311" width="1" height="3" fill="#b4532e"/><rect x="505" y="315" width="1" height="3" fill="#b4532e"/><rect x="505" y="319" width="1" height="3" fill="#b4532e"/><rect x="505" y="323" width="1" height="3" fill="#b4532e"/><rect x="505" y="327" width="1" height="3" fill="#b4532e"/><rect x="505" y="331" width="1" height="3" fill="#b4532e"/><rect x="505" y="335" width="1" height="3" fill="#b4532e"/><rect x="505" y="339" width="1" height="3" fill="#b4532e"/><rect x="505" y="343" width="1" height="3" fill="#b4532e"/><rect x="505" y="347" width="1" height="3" fill="#b4532e"/><rect x="505" y="351" width="1" height="3" fill="#b4532e"/><rect x="505" y="355" width="1" height="3" fill="#b4532e"/><rect x="505" y="359" width="1" height="3" fill="#b4532e"/><rect x="505" y="363" width="1" height="3" fill="#b4532e"/><rect x="505" y="367" width="1" height="3" fill="#b4532e"/><rect x="505" y="371" width="1" height="3" fill="#b4532e"/><g fill="#ff0000"><rect x="284" y="240" width="6" height="6"/><rect x="393" y="240" width="6" height="6"/><rect x="502" y="240" width="6" height="6"/><rect x="284" y="306" width="6" height="6"/><rect x="393" y="306" width="6" height="6"/><rect x="502" y="306" width="6" height="6"/><rect x="284" y="372" width="6" height="6"/><rect x="393" y="372" width="6" height="6"/><rect x="502" y="372" width="6" height="6"/></g></svg>
<div class="a" style="left:856px;top:172px;width:16px;height:443px;background:#e8e8e8"></div>
<div class="a" style="left:856px;top:188px;width:16px;height:233px;background:#b6b6b6"></div>
<svg style="left:858px;top:176px" width="12" height="8" viewBox="0 0 12 8"><path d="M2 5.5L6 2L10 5.5" fill="none" stroke="#333" stroke-width="0.9"/></svg>
<svg style="left:858px;top:602px" width="12" height="8" viewBox="0 0 12 8"><path d="M2 2.5L6 6L10 2.5" fill="none" stroke="#333" stroke-width="0.9"/></svg>
<div class="a" style="left:208px;top:615px;width:648px;height:16px;background:#e8e8e8"></div>
<div class="a" style="left:224px;top:615px;width:334px;height:16px;background:#b6b6b6"></div>
<svg style="left:211px;top:617px" width="8" height="12" viewBox="0 0 8 12"><path d="M5.5 2L2 6L5.5 10" fill="none" stroke="#333" stroke-width="0.9"/></svg>
<svg style="left:843px;top:617px" width="8" height="12" viewBox="0 0 8 12"><path d="M2.5 2L6 6L2.5 10" fill="none" stroke="#333" stroke-width="0.9"/></svg>
<div class="a" style="left:856px;top:615px;width:16px;height:16px;background:#eef1f4"></div>
<div class="a" style="left:208px;top:631px;width:664px;height:5px;background:#cdcdcd"></div>
<!-- ===== DATA PANEL ===== -->
<div class="a" style="left:207px;top:636px;width:666px;height:251px;border:1px solid #c3c7cb;border-top:none;border-radius:0 0 6px 6px;background:#eef1f4"></div>
<svg style="left:217px;top:642px" width="14" height="16" viewBox="0 0 14 16"><g fill="#6aaee6" stroke="#3f7fb8" stroke-width="1"><ellipse cx="7" cy="12" rx="6.5" ry="3"/><rect x="0.5" y="8" width="13" height="4" stroke="none"/><ellipse cx="7" cy="8.5" rx="6.5" ry="3"/><rect x="0.5" y="4.5" width="13" height="4" stroke="none"/><ellipse cx="7" cy="4" rx="6.5" ry="3"/></g><path d="M0.5 8Q7 11 13.5 8M0.5 12Q7 15 13.5 12" fill="none" stroke="#fff" stroke-width="0.8"/></svg>
<div class="t" style="left:236px;top:644px">데이터</div>
<div class="close" style="left:836px;top:639px;width:32px;height:22px">닫기</div>
<!-- toolbar -->
<svg style="left:0;top:0" width="400" height="700" viewBox="0 0 400 700"><g fill="#7cb8ea" stroke="#3f7fb8" stroke-width="1">
<rect x="215.5" y="671.5" width="13.5" height="3.5"/><path d="M222.2 675.8L228.8 684.5H215.6Z"/>
<rect x="241.5" y="681.2" width="13.5" height="3.5"/><path d="M248.2 679.8L254.8 671.2H241.6Z"/>
<path d="M272.5 670.5H275.5V676.5H281.5V679.5H275.5V685.5H272.5V679.5H266.5V676.5H272.5Z"/>
<rect x="292.5" y="676.5" width="15.5" height="3"/>
</g>
<rect x="323.5" y="670.5" width="10.5" height="10" fill="#fff" stroke="#444"/><rect x="318.5" y="675.5" width="10.5" height="10" fill="#7cb8ea" stroke="#444"/>
<rect x="344.5" y="670.5" width="15.5" height="15" fill="#fff" stroke="#444"/><g fill="#7cb8ea"><rect x="346.5" y="672.5" width="5" height="5"/><rect x="353" y="672.5" width="5" height="5"/><rect x="346.5" y="679" width="5" height="5"/><rect x="353" y="679" width="5" height="5"/></g>
</svg>
<svg style="left:370px;top:669px" width="17" height="17" viewBox="0 0 17 17"><path d="M0.5 1.5H6L7.5 3H15.5V15.5H0.5Z" fill="#f6d58c" stroke="#c48d34"/><rect x="8" y="8" width="8" height="8" fill="#1e7b3c"/><path d="M10 10L14 14M14 10L10 14" stroke="#fff" stroke-width="1.2"/></svg>
<div class="t" style="left:390px;top:671px">데이터 가져오기</div>
<svg style="left:487px;top:669px" width="17" height="17" viewBox="0 0 17 17"><path d="M0.5 8L8.5 0.8L16.5 8V16H0.5Z" fill="#fff" stroke="#444"/><rect x="9" y="8.5" width="6" height="7" fill="#fff" stroke="#444"/><circle cx="4.5" cy="12" r="1.6" fill="none" stroke="#444"/><path d="M10.5 11H13.5M10.5 13H13.5" stroke="#444" stroke-width="0.8"/></svg>
<div class="t" style="left:507px;top:671px">일련화데이터 생성</div>
<svg style="left:616px;top:669px" width="17" height="17" viewBox="0 0 17 17"><path d="M0.5 0.5H11L13.5 3V15.5H0.5Z" fill="#6fb1e8" stroke="#3b3b3b"/><rect x="3" y="0.5" width="7" height="4" fill="#fff" stroke="#3b3b3b"/><rect x="8" y="8" width="9" height="9" fill="#1e7b3c"/><path d="M10.5 10.5L14.5 14.5M14.5 10.5L10.5 14.5" stroke="#fff" stroke-width="1.2"/></svg>
<div class="t" style="left:636px;top:671px">데이터 내보내기</div>
<svg style="left:733px;top:669px" width="16" height="16" viewBox="0 0 16 16"><path d="M13.5 5.5A6 6 0 0 0 2.5 5M2.5 10.5A6 6 0 0 0 13.5 11" fill="none" stroke="#444" stroke-width="1.2"/><path d="M14 1.5V6H9.5M2 14.5V10H6.5" fill="none" stroke="#444" stroke-width="1.2"/></svg>
<div class="t" style="left:753px;top:671px">데이터 초기화</div>
<!-- table -->
<div class="a" style="left:212px;top:697px;width:656px;height:185px;border:1px solid #cfd2d5;border-radius:4px;background:#fff;overflow:hidden">
 <div class="a" style="left:0;top:0;width:656px;height:34px;background:#e4e4e4;border-bottom:1px solid #a8a8a8"></div>
</div>
<div class="a" style="left:213px;top:756px;width:639px;height:25px;background:#a9d5ea"></div>
<svg style="left:0;top:0" width="1282" height="890" viewBox="0 0 1282 890">
<g fill="#dcdcdc">
<rect x="261" y="698" width="1" height="183"/><rect x="338" y="698" width="1" height="183"/><rect x="387" y="698" width="1" height="183"/><rect x="484" y="698" width="1" height="183"/>
<rect x="213" y="806" width="639" height="1"/><rect x="213" y="831" width="639" height="1"/><rect x="213" y="856" width="639" height="1"/>
</g>
<g fill="#9a9a9a"><rect x="261" y="698" width="1" height="33"/><rect x="338" y="698" width="1" height="33"/><rect x="387" y="698" width="1" height="33"/><rect x="484" y="698" width="1" height="33"/></g>
</svg>
<div class="t" style="left:225px;top:708px;color:#2b8fc8;font-weight:bold">순서</div>
<div class="a" style="left:274px;top:704px;width:20px;height:20px;background:#2b98cc;border-radius:3px"></div>
<div class="a" style="left:280px;top:710px;width:8px;height:8px;background:#fff"></div>
<div class="t" style="left:303px;top:708px;color:#2b8fc8;font-weight:bold">인쇄</div>
<div class="t" style="left:351px;top:708px;color:#2b8fc8;font-weight:bold">매수</div>
<div class="t" style="left:400px;top:708px;color:#222;font-weight:bold">간이일련번호</div>
<!-- scrollbar -->
<div class="a" style="left:852px;top:731px;width:15px;height:150px;background:#e6e6e6"></div>
<div class="a" style="left:852px;top:748px;width:15px;height:57px;background:#b8b8b8"></div>
<svg style="left:854px;top:735px" width="12" height="8" viewBox="0 0 12 8"><path d="M1.5 6L6 1.5L10.5 6" fill="none" stroke="#444"/></svg>
<svg style="left:854px;top:868px" width="12" height="8" viewBox="0 0 12 8"><path d="M1.5 2L6 6.5L10.5 2" fill="none" stroke="#444"/></svg>
<div class="t" style="left:244px;top:738px">1</div>
<div class="a" style="left:286px;top:734px;width:20px;height:20px;background:#2b98cc;border-radius:3px"></div>
<svg style="left:289px;top:739px" width="14" height="10" viewBox="0 0 14 10"><path d="M1 5L5 8.5L13 1" fill="none" stroke="#fff" stroke-width="1.3"/></svg>
<div class="t" style="left:368px;top:738px">1</div>
<div class="t" style="left:401px;top:738px">0001</div>
<div class="t" style="left:244px;top:763px">2</div>
<div class="a" style="left:286px;top:759px;width:20px;height:20px;background:#2b98cc;border-radius:3px"></div>
<svg style="left:289px;top:764px" width="14" height="10" viewBox="0 0 14 10"><path d="M1 5L5 8.5L13 1" fill="none" stroke="#fff" stroke-width="1.3"/></svg>
<div class="t" style="left:368px;top:763px">1</div>
<div class="t" style="left:401px;top:763px">0002</div>
<div class="t" style="left:244px;top:788px">3</div>
<div class="a" style="left:286px;top:784px;width:20px;height:20px;background:#2b98cc;border-radius:3px"></div>
<svg style="left:289px;top:789px" width="14" height="10" viewBox="0 0 14 10"><path d="M1 5L5 8.5L13 1" fill="none" stroke="#fff" stroke-width="1.3"/></svg>
<div class="t" style="left:368px;top:788px">1</div>
<div class="t" style="left:401px;top:788px">0003</div>
<div class="t" style="left:244px;top:813px">4</div>
<div class="a" style="left:286px;top:809px;width:20px;height:20px;background:#2b98cc;border-radius:3px"></div>
<svg style="left:289px;top:814px" width="14" height="10" viewBox="0 0 14 10"><path d="M1 5L5 8.5L13 1" fill="none" stroke="#fff" stroke-width="1.3"/></svg>
<div class="t" style="left:368px;top:813px">1</div>
<div class="t" style="left:401px;top:813px">0004</div>
<div class="t" style="left:244px;top:838px">5</div>
<div class="a" style="left:286px;top:834px;width:20px;height:20px;background:#2b98cc;border-radius:3px"></div>
<svg style="left:289px;top:839px" width="14" height="10" viewBox="0 0 14 10"><path d="M1 5L5 8.5L13 1" fill="none" stroke="#fff" stroke-width="1.3"/></svg>
<div class="t" style="left:368px;top:838px">1</div>
<div class="t" style="left:401px;top:838px">0005</div>
<div class="t" style="left:244px;top:863px">6</div>
<div class="a" style="left:286px;top:859px;width:20px;height:20px;background:#2b98cc;border-radius:3px"></div>
<svg style="left:289px;top:864px" width="14" height="10" viewBox="0 0 14 10"><path d="M1 5L5 8.5L13 1" fill="none" stroke="#fff" stroke-width="1.3"/></svg>
<div class="t" style="left:368px;top:863px">1</div>
<div class="t" style="left:401px;top:863px">0006</div>

<!-- ===== RIGHT PANEL ===== -->
<div class="panel" style="left:877px;top:171px;width:400px;height:716px"></div>
<svg style="left:887px;top:178px" width="14" height="16" viewBox="0 0 14 16"><rect x="0.5" y="0.5" width="13" height="15" fill="#fff" stroke="#444"/><rect x="1" y="1" width="12" height="2.5" fill="#5b8db8"/><g fill="#5b8db8"><rect x="3" y="5.5" width="1" height="1"/><rect x="5" y="5.5" width="6" height="1"/><rect x="3" y="8.5" width="1" height="1"/><rect x="5" y="8.5" width="6" height="1"/><rect x="3" y="11.5" width="1" height="1"/><rect x="5" y="11.5" width="6" height="1"/></g></svg>
<div class="t" style="left:905px;top:180px">속성</div>
<div class="close" style="left:1238px;top:175px;width:32px;height:22px">닫기</div>
<!-- tabs -->
<div class="a" style="left:885px;top:208px;width:72px;height:35px;background:#fff;border-radius:4px 0 0 4px;box-shadow:0 4px 5px -1px rgba(0,0,0,0.14)"></div>
<div class="a" style="left:957px;top:200px;width:312px;height:679px;background:#fff;border-radius:4px"></div>
<div class="t" style="left:903px;top:217px;font-size:15px">데이터</div>
<div class="t" style="left:902px;top:253px;font-size:15px">위치및</div>
<div class="t" style="left:909px;top:271px;font-size:15px">크기</div>
<div class="t" style="left:902px;top:305px;font-size:15px">텍스트</div>
<div class="t" style="left:906px;top:341px;font-size:15px;word-spacing:4px">선 및</div>
<div class="t" style="left:909px;top:359px;font-size:15px">도형</div>
<div class="t" style="left:909px;top:394px;font-size:15px">효과</div>
<div class="t" style="left:902px;top:429px;font-size:15px">바코드</div>
<div class="t" style="left:902px;top:464px;font-size:15px">이미지</div>
<!-- content -->
<div class="t" style="left:967px;top:211px;font-size:15px">직접 입력</div>
<div class="a" style="left:967px;top:233px;width:293px;height:53px;border:1px solid #c8c8c8;border-radius:2px;background:#fff"></div>
<div class="t" style="left:971px;top:237px;color:#b0b0b0">예제 텍스트</div>
<div class="t" style="left:967px;top:292px;color:#2b98cc">데이터를 연결할 경우 무시됩니다</div>
<div class="t" style="left:967px;top:329px;font-size:15px">데이터 연결</div>
<div class="a" style="left:966px;top:352px;width:40px;height:20px;background:#2b98cc;border-radius:10px"></div>
<div class="a" style="left:991px;top:357px;width:10px;height:10px;background:#fff;border-radius:50%"></div>
<div class="t" style="left:1020px;top:356px">사용</div>
<div class="t" style="left:967px;top:400px;font-size:15px">데이터 연결 방법</div>
<div class="a" style="left:966px;top:423px;width:20px;height:20px;border:1px solid #555;border-radius:50%;background:#fff"></div>
<div class="t" style="left:995px;top:425px">열 이름</div>
<div class="a" style="left:966px;top:455px;width:20px;height:20px;background:#2b98cc;border-radius:50%"></div>
<div class="a" style="left:972px;top:461px;width:8px;height:8px;background:#fff;border-radius:50%"></div>
<div class="t" style="left:995px;top:457px">포맷 편집기</div>
<div class="t" style="left:967px;top:486px">포매터</div>
<div class="t" style="left:967px;top:506px">개체에 연결할 데이터를 자세히 설정할 수 있습니다.</div>
<div class="a" style="left:966px;top:525px;width:295px;height:29px;background:#2b98cc;border-radius:2px;color:#fff;text-align:center;line-height:29px">포맷 편집기</div>
<div class="a" style="left:967px;top:559px;width:293px;height:22px;border:1px solid #c4c4c4;background:#fff;box-shadow:0 1px 1px rgba(0,0,0,0.12)"></div>
<div class="a" style="left:968px;top:560px;width:49px;height:20px;background:#9b9b9b;color:#fff;text-align:center;line-height:20px">일반</div>
<div class="t" style="left:1020px;top:564px">[열] 간이일련번호</div>
<div class="a" style="left:967px;top:583px;width:293px;height:22px;border:1px solid #c4c4c4;background:#fff;box-shadow:0 1px 1px rgba(0,0,0,0.12)"></div>
<div class="a" style="left:968px;top:584px;width:49px;height:20px;background:#9b9b9b;color:#fff;text-align:center;line-height:20px">일반</div>
<div class="t" style="left:1020px;top:588px">[데이터] 번</div>

<!-- PANELS_PLACEHOLDER -->

</body></html>
